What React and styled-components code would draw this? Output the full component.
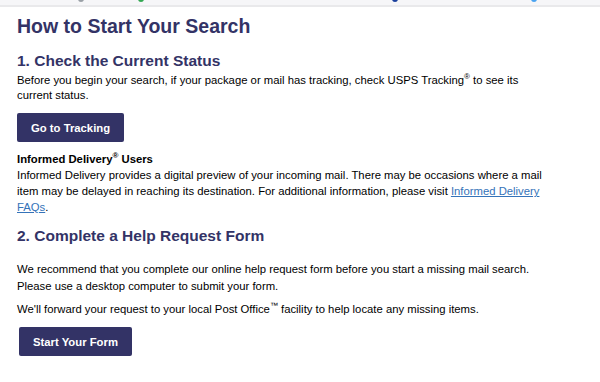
import React from "react";
import styled, { createGlobalStyle } from "styled-components";

const Global = createGlobalStyle`
  html, body { margin: 0; padding: 0; background: #fff; }
  body { font-family: "Liberation Sans", Arial, Helvetica, sans-serif; color: #000; }
`;

const Page = styled.div`
  width: 600px;
  height: 382px;
  overflow: hidden;
  display: flex;
  flex-direction: column;
`;

const BrowserStrip = styled.div`
  height: 5px;
  background: #f6f6f8;
  border-bottom: 2px solid #e9e9eb;
  position: relative;
  overflow: hidden;
`;

const Dot = styled.span`
  position: absolute;
  top: -4px;
  width: 6px;
  height: 6px;
  border-radius: 50%;
  background: ${(p) => p.$c};
`;

const Content = styled.main`
  padding: 6px 17px 0;
  width: 528px;
  display: flex;
  flex-direction: column;
`;

const Title = styled.h1`
  margin: 0;
  font-size: 19.5px;
  line-height: 26px;
  font-weight: 700;
  color: #333366;
`;

const Heading = styled.h2`
  margin: ${(p) => p.$mt || 0}px 0 0;
  font-size: 15.5px;
  line-height: 20px;
  font-weight: 700;
  color: #333366;
`;

const Para = styled.p`
  margin: ${(p) => p.$mt || 0}px 0 0;
  font-size: 11.3px;
  line-height: ${(p) => p.$lh || 16}px;
  color: #000;
`;

const Strong = styled.strong`
  font-weight: 700;
`;

const Sup = styled.sup`
  font-size: 8px;
  line-height: 0;
  vertical-align: 5px;
`;

const Link = styled.a`
  color: #3573b9;
  text-decoration: underline;
  text-underline-offset: 1px;
`;

const Button = styled.button`
  align-self: flex-start;
  margin: ${(p) => p.$mt || 0}px 0 0 ${(p) => p.$ml || 0}px;
  height: 29px;
  padding: 0 14px;
  border: none;
  border-radius: 2px;
  background: #333366;
  color: #fff;
  font-family: "Liberation Sans", Arial, sans-serif;
  font-size: 11.3px;
  font-weight: 700;
  cursor: pointer;
`;

export default function App() {
  return (
    <Page>
      <Global />
      <BrowserStrip>
        <Dot $c="#9aa0a6" style={{ left: 78 }} />
        <Dot $c="#34a853" style={{ left: 138 }} />
        <Dot $c="#1a3f9c" style={{ left: 392 }} />
        <Dot $c="#4aa3f0" style={{ left: 531 }} />
      </BrowserStrip>
      <Content>
        <Title>How to Start Your Search</Title>
        <Heading $mt={12}>1. Check the Current Status</Heading>
        <Para $mt={2} $lh={15}>
          Before you begin your search, if your package or mail has tracking, check USPS Tracking<Sup>®</Sup> to see its
          current status.
        </Para>
        <Button $mt={10}>Go to Tracking</Button>
        <Para $mt={9}>
          <Strong>
            Informed Delivery<Sup>®</Sup> Users
          </Strong>
          <br />
          Informed Delivery provides a digital preview of your incoming mail. There may be occasions where a mail
          item may be delayed in reaching its destination. For additional information, please visit{" "}
          <Link href="#">Informed Delivery FAQs</Link>.
        </Para>
        <Heading $mt={11}>2. Complete a Help Request Form</Heading>
        <Para $mt={15} $lh={16.5}>
          We recommend that you complete our online help request form before you start a missing mail search.
          <br />
          Please use a desktop computer to submit your form.
        </Para>
        <Para $mt={7}>
          We'll forward your request to your local Post Office<Sup>™</Sup> facility to help locate any missing items.
        </Para>
        <Button $mt={10} $ml={2}>Start Your Form</Button>
      </Content>
    </Page>
  );
}
